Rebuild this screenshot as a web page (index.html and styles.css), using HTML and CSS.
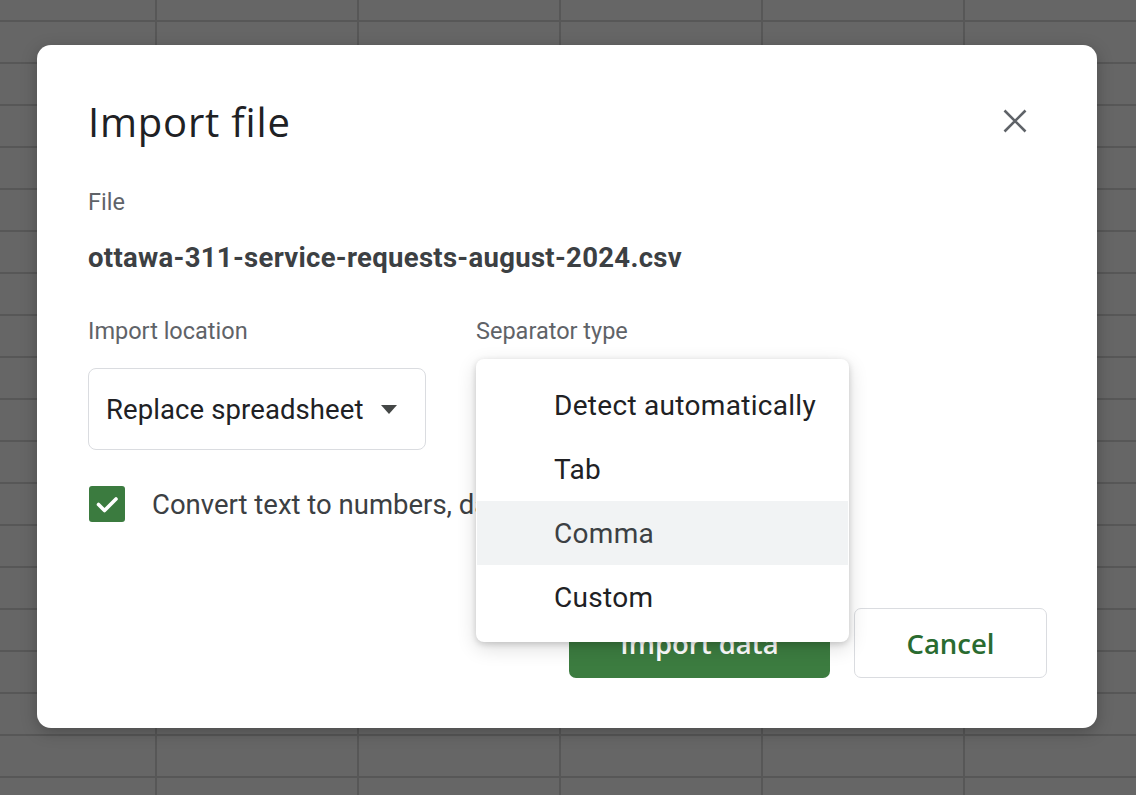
FILE: index.html
```html
<!DOCTYPE html>
<html lang="en">
<head>
<meta charset="utf-8">
<title>Import file</title>
<link rel="stylesheet" href="styles.css">
</head>
<body>
<div class="backdrop">
  <div class="modal" role="dialog" aria-labelledby="dlg-title">
    <div class="modal-header">
      <h1 class="modal-title" id="dlg-title">Import file</h1>
      <button class="close-btn" aria-label="Close">
        <svg width="24" height="24" viewBox="0 0 24 24"><path d="M1.5 1.5 L22.5 22.5 M22.5 1.5 L1.5 22.5" stroke="#5f6368" stroke-width="2.6" fill="none"/></svg>
      </button>
    </div>

    <div class="field-label file-label">File</div>
    <div class="file-name">ottawa-311-service-requests-august-2024.csv</div>

    <div class="fields">
      <div class="field">
        <div class="field-label">Import location</div>
        <div class="select">
          <span>Replace spreadsheet</span>
          <svg class="caret" width="16" height="9" viewBox="0 0 16 9"><path d="M0 0 H16 L8 9 Z" fill="#444746"/></svg>
        </div>
      </div>
      <div class="field sep-field">
        <div class="field-label">Separator type</div>
        <ul class="menu" role="listbox">
          <li class="menu-item">Detect automatically</li>
          <li class="menu-item">Tab</li>
          <li class="menu-item active">Comma</li>
          <li class="menu-item">Custom</li>
        </ul>
      </div>
    </div>

    <label class="check-row">
      <span class="checkbox">
        <svg width="24" height="24" viewBox="0 0 24 24"><path d="M3.5 12.5 L9.5 18.5 L21 7" stroke="#fff" stroke-width="3.6" fill="none" stroke-linecap="round" stroke-linejoin="round"/></svg>
      </span>
      <span class="check-text">Convert text to numbers, dates, and formulas</span>
    </label>

    <div class="footer">
      <button class="btn btn-primary">Import data</button>
      <button class="btn btn-secondary">Cancel</button>
    </div>
  </div>
</div>
</body>
</html>
```

FILE: styles.css
```css
* { box-sizing: border-box; }

html, body {
  margin: 0;
  padding: 0;
}

body {
  width: 1136px;
  height: 795px;
  overflow: hidden;
  background-color: #666666;
  background-image:
    linear-gradient(to bottom, #575757 2px, transparent 2px),
    linear-gradient(to right, #575757 2px, transparent 2px);
  background-size: 100% 42px, 202px 100%;
  background-position: 0 20px, 155px 0;
  font-family: Roboto, "Liberation Sans", sans-serif;
}

.backdrop {
  padding: 45px 0 0 37px;
}

.modal {
  width: 1060px;
  height: 683px;
  background: #fff;
  border-radius: 14px;
  box-shadow: 0 4px 16px rgba(0,0,0,0.25);
  padding: 50px 50px 50px 51px;
  display: flex;
  flex-direction: column;
}

.modal-header {
  display: flex;
  align-items: center;
  justify-content: space-between;
  height: 50px;
}

.modal-title {
  margin: 0;
  font-family: "Open Sans", Roboto, sans-serif;
  font-weight: 400;
  font-size: 40px;
  line-height: 50px;
  color: #202124;
  letter-spacing: 0.8px;
  margin-top: 4px;
}

.close-btn {
  width: 40px;
  height: 40px;
  margin-right: 12px;
  margin-top: 2px;
  border: none;
  background: transparent;
  padding: 0;
  display: flex;
  align-items: center;
  justify-content: center;
}

.field-label {
  font-size: 23.5px;
  line-height: 26px;
  color: #5f6368;
}

.file-label {
  margin-top: 44px;
}

.file-name {
  margin-top: 27px;
  font-size: 27.5px;
  line-height: 32px;
  font-weight: 700;
  color: #3c4043;
  letter-spacing: 0.3px;
}

.fields {
  margin-top: 44px;
  display: flex;
  gap: 50px;
}

.field {
  width: 338px;
}

.sep-field {
  position: relative;
}

.select {
  margin-top: 24px;
  height: 82px;
  border: 1.5px solid #dadce0;
  border-radius: 8px;
  display: flex;
  align-items: center;
  padding: 0 28px 0 17px;
  justify-content: space-between;
  font-size: 27.5px;
  letter-spacing: 0.1px;
  color: #202124;
}

.caret {
  margin-top: 1px;
}

.menu {
  position: absolute;
  top: 41px;
  left: 0;
  width: 373px;
  margin: 0;
  padding: 14px 1px 13px 1px;
  list-style: none;
  background: #fff;
  border-radius: 8px;
  box-shadow: 0 2px 6px rgba(0,0,0,0.16), 0 6px 20px rgba(0,0,0,0.14);
  z-index: 2;
}

.menu-item {
  height: 64px;
  display: flex;
  align-items: center;
  padding-left: 77px;
  font-size: 28px;
  letter-spacing: 0.3px;
  color: #202124;
}

.menu-item.active {
  background: #f1f3f4;
  color: #3c4043;
}

.check-row {
  margin-top: 36px;
  display: flex;
  align-items: center;
  gap: 27px;
  height: 36px;
}

.checkbox {
  width: 36px;
  height: 36px;
  margin-left: 1px;
  border-radius: 3px;
  background: #3b7b3f;
  display: flex;
  align-items: center;
  justify-content: center;
}

.check-text {
  font-size: 27.5px;
  color: #3c4043;
  white-space: nowrap;
}

.footer {
  margin-top: auto;
  display: flex;
  justify-content: flex-end;
  gap: 24px;
}

.btn {
  height: 70px;
  border-radius: 7px;
  font-family: "Open Sans", Roboto, sans-serif;
  font-size: 27.5px;
  font-weight: 600;
  padding: 0;
}

.btn-primary {
  width: 261px;
  background: #3c7c40;
  color: #fff;
  border: none;
}

.btn-secondary {
  width: 193px;
  background: #fff;
  color: #2a6b30;
  border: 1.5px solid #dadce0;
}
```
